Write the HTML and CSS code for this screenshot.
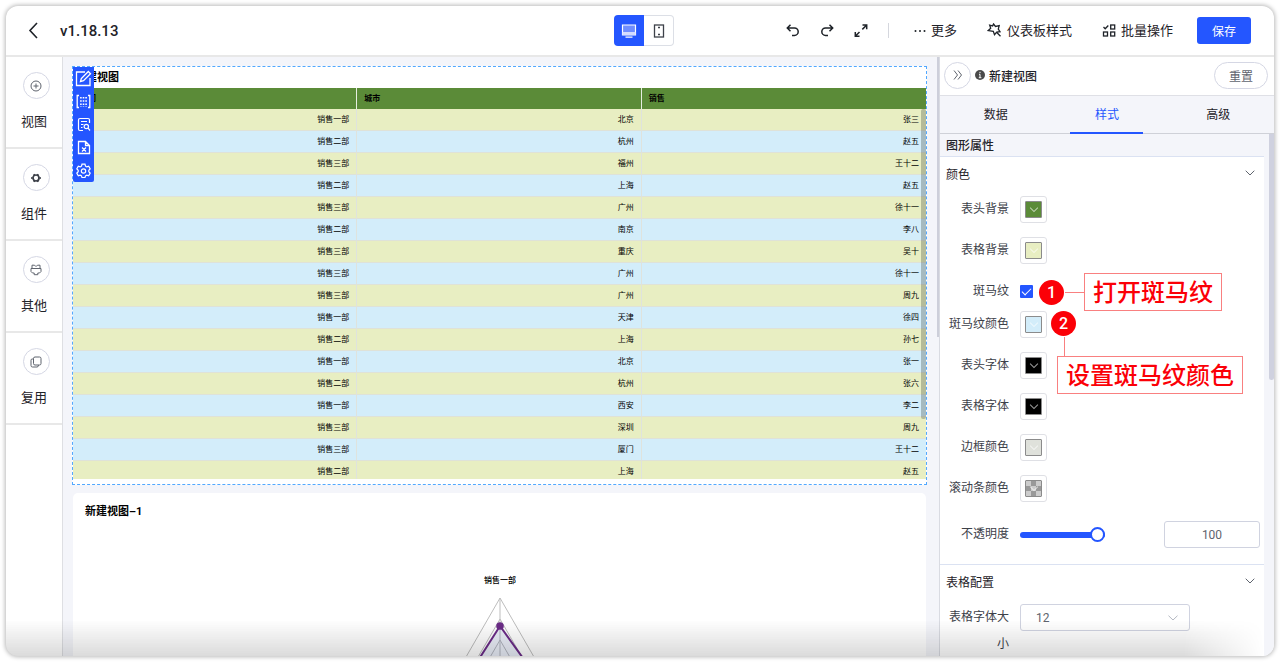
FILE: index.html
```html
<!DOCTYPE html>
<html lang="zh-CN">
  <head>
    <meta charset="UTF-8" />
    <meta name="viewport" content="width=device-width, initial-scale=1.0" />
    <title>v1.18.13</title>
    <link rel="stylesheet" href="styles.css">
  </head>
  <body>
    <div class="window">
      <header class="toolbar">
        <div class="toolbar-left">
          <button type="button" class="icon-btn" aria-label="返回">
            <svg width="12" height="18" viewBox="0 0 12 18"><path d="M10 1 3 8.500l7 7.500" fill="none" stroke="#1f2329" stroke-width="1.600"/></svg>
          </button>
          <span class="version">v1.18.13</span>
        </div>

        <div class="device-toggle">
          <button type="button" class="device active" aria-label="PC">
            <svg width="16" height="16" viewBox="0 0 16 16"><path d="M1.500 2h13v10h-13z" fill="#6f8dff" stroke="#fff" stroke-width="1.200"/><path d="M1.500 9h13v3h-13z" fill="#d3dcff"/><path d="M4.500 13.500h7v1.200h-7z" fill="#fff"/></svg>
          </button>
          <button type="button" class="device" aria-label="移动端">
            <svg width="14" height="16" viewBox="0 0 14 16"><rect x="2.500" y="2" width="9" height="12" fill="none" stroke="#3d4149" stroke-width="1.300"/><path d="M6 4.500h2M6 11.500h2" stroke="#3d4149" stroke-width="1.300"/></svg>
          </button>
        </div>

        <div class="toolbar-right">
          <div class="history">
            <button type="button" class="icon-btn" aria-label="撤销">
              <svg width="14" height="14" viewBox="0 0 14 14"><path d="M1.500 4h7a3.700 3.700 0 0 1 0 7.400H6M4.500.8 1.300 4l3.200 3.200" fill="none" stroke="#1f2329" stroke-width="1.500"/></svg>
            </button>
            <button type="button" class="icon-btn" aria-label="重做">
              <svg width="14" height="14" viewBox="0 0 14 14"><path d="M12.500 4h-7a3.700 3.700 0 0 0 0 7.400H8M9.500.8 12.700 4 9.500 7.200" fill="none" stroke="#1f2329" stroke-width="1.500"/></svg>
            </button>
            <button type="button" class="icon-btn" aria-label="全屏">
              <svg width="14" height="14" viewBox="0 0 14 14"><path d="M8.500 1h4.200v4.200M12.500 1.200 8.300 5.400M5.500 12.200H1.300V8M1.500 12l4-4" fill="none" stroke="#1f2329" stroke-width="1.500"/></svg>
            </button>
          </div>
          <span class="divider"></span>
          <div class="actions">
            <button type="button" class="text-btn">
              <svg width="12" height="14" viewBox="0 0 12 14" fill="#1f2329"><circle cx="1.500" cy="7" r="1"/><circle cx="6" cy="7" r="1"/><circle cx="10.500" cy="7" r="1"/></svg>
              更多
            </button>
            <button type="button" class="text-btn">
              <svg width="15" height="15" viewBox="0 0 15 15"><path d="M6.500 1 8.500 3.500l3.700-.9-.9 3.500 1.700 2.600-3.300.4-2.200 2.600-1.200-3.300L1.200 7.600l2.500-2.300L2.700 2.200 5.600 3zM9.800 9.500l3.700 3.800" fill="none" stroke="#1f2329" stroke-width="1.300"/></svg>
              仪表板样式
            </button>
            <button type="button" class="text-btn">
              <svg width="14" height="14" viewBox="0 0 14 14" fill="none" stroke="#1f2329" stroke-width="1.300"><path d="M1.500 3l1.700 1.700L6.300 1.500"/><rect x="8.700" y="1" width="4" height="4"/><rect x="1.500" y="8" width="4" height="4"/><rect x="8.700" y="8" width="4" height="4"/></svg>
              批量操作
            </button>
          </div>
          <button type="button" class="save-btn">保存</button>
        </div>
      </header>

      <div class="workspace">
        <nav class="sidebar">
          <a class="side-item" href="#view">
            <span class="side-icon"><svg width="12" height="12" viewBox="0 0 12 12" fill="none" stroke="#5f646e"><circle cx="6" cy="6" r="5"/><path d="M6 3.500v5M3.500 6h5"/></svg></span>
            <span class="side-text">视图</span>
          </a>
          <a class="side-item" href="#component">
            <span class="side-icon"><svg width="12" height="12" viewBox="0 0 12 12" fill="none" stroke="#3d4149"><circle cx="6" cy="6" r="3" stroke-width="1.700"/><path d="M3.800 2.200l.7 1.200M8.200 2.200l-.7 1.200M3.800 9.800l.7-1.200M8.200 9.800l-.7-1.200M1.200 6h1.400M10.800 6H9.400" stroke-width="2"/></svg></span>
            <span class="side-text">组件</span>
          </a>
          <a class="side-item" href="#other">
            <span class="side-icon"><svg width="12" height="12" viewBox="0 0 12 12" fill="none" stroke="#5f646e"><path d="M2 4.500V1.200h2.500l1 1h1l1-1H10v3.300M1 4.500h10v3L9.500 9H7.800v1.700H4.200V9H2.500L1 7.500z"/></svg></span>
            <span class="side-text">其他</span>
          </a>
          <a class="side-item" href="#reuse">
            <span class="side-icon"><svg width="12" height="12" viewBox="0 0 12 12" fill="none" stroke="#5f646e"><rect x="3.500" y="1" width="7.500" height="8" rx="1.500"/><path d="M3.500 3H2.200Q1 3 1 4.200V9.500Q1 11 2.500 11H7q1.500 0 1.500-2"/></svg></span>
            <span class="side-text">复用</span>
          </a>
        </nav>

        <main class="canvas">
          <section class="widget selected">
            <h2 class="widget-title">新建视图</h2>
            <div class="table-wrap">
              <table class="data-table">
                <thead>
                  <tr><th>部门</th><th>城市</th><th>销售</th></tr>
                </thead>
                <tbody>
                  <tr><td>销售一部</td><td>北京</td><td>张三</td></tr>
                  <tr><td>销售二部</td><td>杭州</td><td>赵五</td></tr>
                  <tr><td>销售三部</td><td>福州</td><td>王十二</td></tr>
                  <tr><td>销售二部</td><td>上海</td><td>赵五</td></tr>
                  <tr><td>销售三部</td><td>广州</td><td>徐十一</td></tr>
                  <tr><td>销售二部</td><td>南京</td><td>李八</td></tr>
                  <tr><td>销售三部</td><td>重庆</td><td>吴十</td></tr>
                  <tr><td>销售三部</td><td>广州</td><td>徐十一</td></tr>
                  <tr><td>销售三部</td><td>广州</td><td>周九</td></tr>
                  <tr><td>销售一部</td><td>天津</td><td>徐四</td></tr>
                  <tr><td>销售二部</td><td>上海</td><td>孙七</td></tr>
                  <tr><td>销售一部</td><td>北京</td><td>张一</td></tr>
                  <tr><td>销售二部</td><td>杭州</td><td>张六</td></tr>
                  <tr><td>销售一部</td><td>西安</td><td>李二</td></tr>
                  <tr><td>销售三部</td><td>深圳</td><td>周九</td></tr>
                  <tr><td>销售三部</td><td>厦门</td><td>王十二</td></tr>
                  <tr><td>销售二部</td><td>上海</td><td>赵五</td></tr>
                </tbody>
              </table>
              <span class="table-thumb"></span>
            </div>
            <div class="widget-tools">
              <button type="button" aria-label="编辑"><svg width="17" height="17" viewBox="0 0 17 17" fill="none" stroke="#fff" stroke-width="1.300"><path d="M10 2H1.500v13.500H15V8"/><path d="M5.500 11.500 6.300 8.500 13.300 1.500l2.200 2.200-7 7z"/></svg></button>
              <button type="button" aria-label="间距"><svg width="15" height="15" viewBox="0 0 15 15" fill="none" stroke="#fff" stroke-width="1.300"><path d="M3 1.500H1.200v12H3M12 1.500h1.800v12H12"/><path d="M4.900 3v10M7.500 3v10M10.100 3v10" stroke-width="1.600" stroke-dasharray="1.600 1.600"/></svg></button>
              <button type="button" aria-label="查看数据"><svg width="14" height="15" viewBox="0 0 14 15" fill="none" stroke="#fff" stroke-width="1.200"><path d="M12.500 6V3q0-1.500-1.500-1.500H3Q1.500 1.500 1.500 3v9q0 1.500 1.500 1.500h3M4 4.500h6M4 7.500h2.500M4 10.500h1.500"/><circle cx="9.300" cy="9.500" r="2.200"/><path d="M11 11.200l2 2.300"/></svg></button>
              <button type="button" aria-label="导出Excel"><svg width="14" height="15" viewBox="0 0 14 15" fill="none" stroke="#fff" stroke-width="1.300"><path d="M8.500 1.500h-7v12h11v-8zM8.500 1.500v4h4M5 7.500l4 4M9 7.500l-4 4"/></svg></button>
              <button type="button" aria-label="设置"><svg width="15" height="15" viewBox="0 0 15 15" fill="none" stroke="#fff" stroke-width="1.200"><path d="M6 1.200h3l.5 1.900 1.300.8 1.900-.6 1.500 2.600-1.400 1.400v1.400l1.400 1.400-1.500 2.600-1.900-.6-1.300.8-.5 1.700H6l-.5-1.700-1.300-.8-1.900.6L.8 10.100l1.400-1.400V7.300L.8 5.900l1.500-2.600 1.900.6 1.300-.8z"/><circle cx="7.500" cy="8" r="2.200"/></svg></button>
            </div>
          </section>

          <section class="widget chart-widget">
            <h2 class="widget-title">新建视图–1</h2>
            <svg class="radar" width="240" height="250" viewBox="0 0 240 250" fill="none">
              <path d="M120 28 188 146M120 28 52 146M120 49l56 97M120 49 64 146M120 70l44 76M120 70 76 146M120 28v118" stroke="#bdbdbd"/>
              <path d="M120 56 64 144h119z" fill="#5470c6" fill-opacity=".12" stroke="#6b2c87" stroke-width="2"/>
              <circle cx="120" cy="56" r="3.800" fill="#6b2c87"/>
              <text x="120" y="13" class="radar-label">销售一部</text>
            </svg>
          </section>
          <span class="canvas-thumb"></span>
        </main>

        <aside class="panel">
          <div class="panel-head">
            <button type="button" class="collapse-btn" aria-label="收起">
              <svg width="10" height="10" viewBox="0 0 10 10" fill="none" stroke="#5f646e"><path d="M1 .5 4.500 5 1 9.500M5 .5 8.500 5 5 9.500"/></svg>
            </button>
            <svg width="10" height="10" viewBox="0 0 10 10"><circle cx="5" cy="5" r="5" fill="#4a4a4a"/><path d="M5 1.800v1.300M4 4.300h1v3.200M3.800 7.700h2.600" stroke="#fff" fill="none"/></svg>
            <span class="panel-title">新建视图</span>
            <button type="button" class="reset-btn">重置</button>
          </div>
          <div class="tabs">
            <a class="tab" href="#data">数据</a>
            <a class="tab active" href="#style">样式</a>
            <a class="tab" href="#advanced">高级</a>
          </div>

          <div class="panel-scroll">
            <div class="panel-content">
              <h3 class="group-title">图形属性</h3>
              <section class="group">
                <h4 class="section-title">颜色
                  <svg width="10" height="6" viewBox="0 0 10 6"><path d="M.7.7 5 5 9.300.7" fill="none" stroke="#5f646e"/></svg>
                </h4>
                <div class="form-row">
                  <label for="headBg">表头背景</label>
                  <button type="button" id="headBg" class="color-btn"><span class="swatch green"></span></button>
                </div>
                <div class="form-row">
                  <label for="tableBg">表格背景</label>
                  <button type="button" id="tableBg" class="color-btn"><span class="swatch lime"></span></button>
                </div>
                <div class="form-row check-row">
                  <label for="zebra">斑马纹</label>
                  <input type="checkbox" id="zebra" checked />
                  <div class="callout callout-one">
                    <span class="callout-num">1</span>
                    <span class="callout-text">打开斑马纹</span>
                  </div>
                </div>
                <div class="form-row">
                  <label for="zebraColor">斑马纹颜色</label>
                  <button type="button" id="zebraColor" class="color-btn"><span class="swatch sky"></span></button>
                  <div class="callout callout-two">
                    <span class="callout-num">2</span>
                    <span class="callout-text">设置斑马纹颜色</span>
                  </div>
                </div>
                <div class="form-row">
                  <label for="headFont">表头字体</label>
                  <button type="button" id="headFont" class="color-btn"><span class="swatch black"></span></button>
                </div>
                <div class="form-row">
                  <label for="tableFont">表格字体</label>
                  <button type="button" id="tableFont" class="color-btn"><span class="swatch black"></span></button>
                </div>
                <div class="form-row">
                  <label for="borderColor">边框颜色</label>
                  <button type="button" id="borderColor" class="color-btn"><span class="swatch grey"></span></button>
                </div>
                <div class="form-row">
                  <label for="scrollColor">滚动条颜色</label>
                  <button type="button" id="scrollColor" class="color-btn"><span class="swatch checker"></span></button>
                </div>
                <div class="form-row slider-row">
                  <label for="opacity">不透明度</label>
                  <input type="range" id="opacity" min="0" max="100" value="100" />
                  <input type="text" class="num-input" value="100" aria-label="不透明度数值" />
                </div>
              </section>

              <section class="group">
                <h4 class="section-title">表格配置
                  <svg width="10" height="6" viewBox="0 0 10 6"><path d="M.7.7 5 5 9.300.7" fill="none" stroke="#5f646e"/></svg>
                </h4>
                <div class="form-row">
                  <label for="fontSize">表格字体大小</label>
                  <div class="select-wrap">
                    <select id="fontSize"><option>12</option><option>14</option><option>16</option></select>
                    <svg width="10" height="6" viewBox="0 0 10 6"><path d="M.5.7 5 5 9.500.7" fill="none" stroke="#b4b8c2"/></svg>
                  </div>
                </div>
              </section>
            </div>
            <span class="panel-thumb"></span>
          </div>
        </aside>
      </div>
      <div class="bottom-fade"></div>
    </div>
  </body>
</html>
```

FILE: styles.css
```css
* {
  box-sizing: border-box;
}
body {
  margin: 0;
  padding: 6px;
  height: 100vh;
  background: #fff;
  color: #1f2329;
  font-family: Roboto, 'Noto Sans CJK SC', sans-serif;
  font-size: 12px;
}
h2,
h3,
h4 {
  margin: 0;
}
button,
input,
select {
  margin: 0;
  padding: 0;
  font-family: inherit;
  font-size: 12px;
  color: inherit;
}
button {
  border: none;
  background: none;
  cursor: pointer;
}
a {
  color: inherit;
  text-decoration: none;
}
svg {
  display: block;
  flex: none;
}
.window {
  position: relative;
  display: flex;
  flex-direction: column;
  height: 100%;
  border-radius: 12px;
  background: #fff;
  box-shadow: 0 0 4px 1px rgba(0, 0, 0, 0.28);
  overflow: hidden;
}

/* toolbar */
.toolbar {
  display: grid;
  grid-template-columns: 1fr auto 1fr;
  align-items: center;
  height: 51px;
  padding: 0 23px 0 21px;
  border-bottom: 2px solid #e8e8e8;
  flex: none;
}
.toolbar-left,
.toolbar-right,
.history,
.actions,
.text-btn {
  display: flex;
  align-items: center;
}
.toolbar-left {
  gap: 21px;
}
.version {
  font-size: 15px;
  font-weight: 500;
}
.device-toggle {
  display: flex;
  margin-left: 10px;
}
.device {
  display: flex;
  align-items: center;
  justify-content: center;
  width: 30px;
  height: 31px;
  border: 1px solid #dcdfe6;
  border-left: none;
  border-radius: 0 4px 4px 0;
}
.device.active {
  border: none;
  border-radius: 4px 0 0 4px;
  background: #2456ff;
}
.toolbar-right {
  justify-content: flex-end;
}
.history {
  gap: 20px;
}
.divider {
  width: 1px;
  height: 15px;
  margin: 0 25px 0 20px;
  background: #d5d7de;
}
.actions {
  gap: 30px;
  margin-right: 24px;
}
.text-btn {
  gap: 5px;
  font-size: 13px;
  line-height: 20px;
  white-space: nowrap;
}
.save-btn {
  width: 54px;
  height: 27px;
  border-radius: 3px;
  background: #2456ff;
  color: #fff;
}

/* left menu */
.workspace {
  display: flex;
  flex: 1;
  min-height: 0;
}
.sidebar {
  width: 57px;
  border-right: 1px solid #dedfe3;
  flex: none;
}
.side-item {
  display: flex;
  flex-direction: column;
  align-items: center;
  gap: 13px;
  height: 92px;
  padding-top: 15px;
  border-bottom: 2px solid #e8e8e8;
}
.side-icon {
  display: flex;
  align-items: center;
  justify-content: center;
  width: 27px;
  height: 27px;
  margin-left: 4px;
  border: 1px solid #d5d7e4;
  border-radius: 50%;
}
.side-text {
  font-size: 13px;
  line-height: 20px;
}

/* canvas */
.canvas {
  position: relative;
  display: flex;
  flex-direction: column;
  gap: 8px;
  flex: 1;
  min-width: 0;
  padding: 9px 12px 0 9px;
  background: #f4f5fa;
  overflow: hidden;
}
.canvas-thumb {
  position: absolute;
  top: 0;
  right: 0;
  width: 2px;
  height: 280px;
  background: #cdcfda;
}
.widget {
  position: relative;
  background: #fff;
  flex: none;
}
.widget.selected {
  padding-bottom: 5px;
  border: 1px dashed #52a8ff;
}
.widget-title {
  padding-left: 2px;
  font-size: 11px;
  font-weight: 700;
  line-height: 21px;
  color: #000;
}
.table-wrap {
  position: relative;
  height: 391px;
  overflow: hidden;
}
.data-table {
  width: 100%;
  table-layout: fixed;
  border-collapse: separate;
  border-spacing: 0;
  font-size: 8px;
  line-height: 20px;
  color: #000;
}
.data-table th,
.data-table td {
  padding: 0 7px;
  border-right: 1px solid #dfe3dd;
}
.data-table th:last-child,
.data-table td:last-child {
  border-right: none;
}
.data-table th {
  height: 21px;
  background: #5b8b38;
  border-right-color: #e6eee0;
  text-align: left;
}
.data-table td {
  height: 22px;
  border-bottom: 1px solid #dfe2d8;
  text-align: right;
}
.data-table tbody tr:nth-child(odd) {
  background: #e8eec2;
}
.data-table tbody tr:nth-child(even) {
  background: #d3edfa;
}
.table-thumb {
  position: absolute;
  top: 21px;
  right: 0;
  width: 5px;
  height: 310px;
  border-radius: 2px;
  background: rgba(60, 70, 60, 0.3);
}
.widget-tools {
  position: absolute;
  top: 0;
  left: 0;
  display: flex;
  flex-direction: column;
  width: 21px;
  border-radius: 0 0 2px 2px;
  background: #2456ff;
}
.widget-tools button {
  display: flex;
  align-items: center;
  justify-content: center;
  height: 23px;
}
.chart-widget {
  margin: 0 1px;
  border-radius: 5px;
}
.chart-widget .widget-title {
  padding: 8px 12px 0;
}
.radar {
  margin: 48px auto 0;
}
.radar-label {
  fill: #000;
  font-size: 8px;
  font-weight: 500;
  text-anchor: middle;
}

/* right panel */
.panel {
  display: flex;
  flex-direction: column;
  width: 335px;
  border-left: 1px solid #d9dbe2;
  flex: none;
}
.panel-head {
  display: flex;
  align-items: center;
  gap: 4px;
  height: 39px;
  padding: 0 6px 2px 4px;
  border-bottom: 1px solid #dfe0e6;
}
.collapse-btn {
  display: flex;
  align-items: center;
  justify-content: center;
  width: 27px;
  height: 27px;
  border: 1px solid #d5d7e4;
  border-radius: 50%;
}
.panel-title {
  font-weight: 500;
}
.reset-btn {
  width: 54px;
  height: 27px;
  margin-left: auto;
  border: 1px solid #d5d7e4;
  border-radius: 14px;
  color: #5f646e;
}
.tabs {
  display: grid;
  grid-template-columns: repeat(3, 1fr);
  justify-items: center;
  height: 38px;
  border-bottom: 1px solid #cfd1d8;
  background: #f4f5fa;
}
.tab {
  width: 73px;
  height: 38px;
  line-height: 38px;
  text-align: center;
}
.tab.active {
  border-bottom: 2px solid #2456ff;
  color: #2456ff;
}
.panel-scroll {
  position: relative;
  flex: 1;
  min-height: 0;
  padding-right: 10px;
  background: #f4f5fa;
  overflow: hidden;
}
.panel-thumb {
  position: absolute;
  top: 0;
  right: 0;
  width: 5px;
  height: 246px;
  border-radius: 0 0 3px 3px;
  background: #cfd1df;
}
.panel-content {
  background: #fff;
}
.group-title {
  height: 23px;
  padding-left: 6px;
  border-bottom: 1px solid #dbe2f2;
  background: #f4f5fa;
  font-size: 12px;
  font-weight: 500;
  line-height: 24px;
}
.group {
  padding-bottom: 2px;
  border-bottom: 1px solid #dbe2f2;
}
.section-title {
  display: flex;
  align-items: center;
  justify-content: space-between;
  height: 39px;
  padding: 0 9px 7px 6px;
  font-size: 12px;
  font-weight: 400;
}
.form-row {
  position: relative;
  display: flex;
  align-items: flex-start;
  gap: 11px;
  margin-bottom: 14px;
}
.form-row label {
  width: 69px;
  padding-left: 5px;
  line-height: 27px;
  text-align: right;
  color: #3d4149;
  flex: none;
}
.check-row {
  align-items: center;
  margin-bottom: 6px;
}
.slider-row {
  align-items: center;
  margin-top: 19px;
}
.color-btn {
  display: flex;
  align-items: center;
  justify-content: center;
  width: 27px;
  height: 27px;
  border: 1px solid #dfe0e5;
  border-radius: 3px;
}
.swatch {
  display: flex;
  align-items: center;
  justify-content: center;
  width: 17px;
  height: 17px;
  border: 1px solid #8b8b8b;
  border-radius: 1px;
}
.swatch::after {
  content: '';
  width: 5px;
  height: 5px;
  margin-top: -3px;
  border: solid rgba(255, 255, 255, 0.6);
  border-width: 0 1px 1px 0;
  transform: rotate(45deg);
}
.green {
  background: #5b8b38;
}
.lime {
  background: #e8eec2;
}
.sky {
  background: #d3edfa;
}
.black {
  background: #000;
}
.grey {
  background: #dfe1db;
}
.checker {
  background: repeating-conic-gradient(#999 0 25%, #ccc 0 50%) 0 0 / 10px 10px;
}
input[type='checkbox'] {
  display: grid;
  place-items: center;
  width: 13px;
  height: 13px;
  border-radius: 1px;
  background: #2456ff;
  appearance: none;
}
input[type='checkbox']::after {
  content: '';
  width: 4px;
  height: 8px;
  margin-top: -2px;
  border: solid #fff;
  border-width: 0 1px 1px 0;
  transform: rotate(45deg);
}
input[type='range'] {
  width: 85px;
  height: 15px;
  background: none;
  appearance: none;
}
input[type='range']::-webkit-slider-runnable-track {
  height: 6px;
  border-radius: 3px;
  background: #2456ff;
}
input[type='range']::-webkit-slider-thumb {
  width: 15px;
  height: 15px;
  margin-top: -5px;
  border: 2px solid #2456ff;
  border-radius: 50%;
  background: #fff;
  appearance: none;
}
.num-input {
  width: 96px;
  height: 27px;
  margin: 0 4px 0 auto;
  border: 1px solid #d0d3e0;
  border-radius: 3px;
  text-align: center;
  color: #5f646e;
}
.select-wrap {
  display: grid;
  align-items: center;
  width: 170px;
}
.select-wrap select,
.select-wrap svg {
  grid-area: 1 / 1;
}
.select-wrap select {
  height: 27px;
  padding: 0 15px;
  border: 1px solid #d0d3e0;
  border-radius: 3px;
  background: #fff;
  color: #5f646e;
  appearance: none;
}
.select-wrap svg {
  justify-self: end;
  margin-right: 12px;
  pointer-events: none;
}

/* callouts over the form */
.callout {
  position: absolute;
  z-index: 2;
  display: flex;
}
.callout-one {
  top: -5px;
  left: 99px;
  align-items: center;
}
.callout-two {
  top: 0;
  left: 117px;
  flex-direction: column;
}
.callout-num {
  width: 25px;
  height: 25px;
  border-radius: 50%;
  background: #fb0007;
  color: #fff;
  font-size: 16px;
  font-weight: 500;
  line-height: 25px;
  text-align: center;
}
.callout-one .callout-num {
  margin-right: 20px;
}
.callout-two .callout-num {
  margin: 0 0 20px -6px;
}
.callout-text {
  position: relative;
  padding: 2px 8px 0;
  border: 1px solid #f98080;
  background: #fff;
  color: #fb0007;
  font-size: 24px;
  font-weight: 500;
  line-height: 34px;
  white-space: nowrap;
}
.callout-text::before {
  content: '';
  position: absolute;
  background: #f98080;
}
.callout-one .callout-text::before {
  top: 18px;
  right: 100%;
  width: 20px;
  height: 1px;
}
.callout-two .callout-text::before {
  bottom: 100%;
  left: 6px;
  width: 1px;
  height: 20px;
}
.bottom-fade {
  position: absolute;
  right: 0;
  bottom: 0;
  left: 0;
  height: 36px;
  background: linear-gradient(rgba(0, 0, 0, 0), rgba(0, 0, 0, 0.14));
  mask-image: linear-gradient(to left, transparent 10px, #000 90px);
  pointer-events: none;
}
```
